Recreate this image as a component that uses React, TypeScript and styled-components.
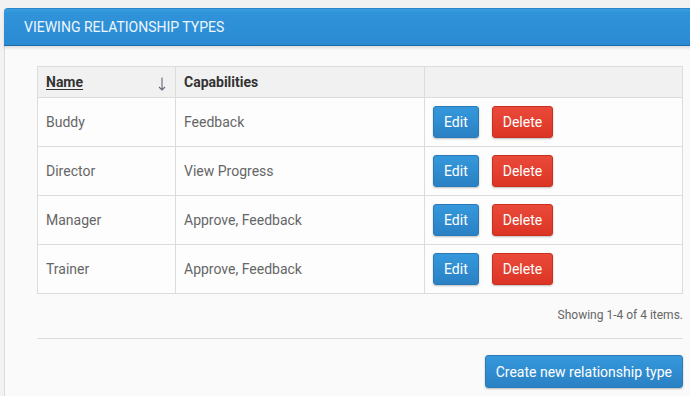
import React from 'react';
import styled, {createGlobalStyle} from 'styled-components';

const GlobalStyle = createGlobalStyle`
body {
    margin: 0;
    background: #f2f2f2;
    font-family: Roboto, "Liberation Sans", sans-serif;
    overflow: hidden;
}
`

const Panel = styled.div`
margin: 8px 0 0 4px;
width: 711px;
border-radius: 4px 4px 0 0;
background: #fafafa;
border-left: 1px solid #dcdcdc;
height: 400px;
`

const PanelHeader = styled.div`
height: 36px;
display: flex;
align-items: center;
padding-left: 20px;
margin-left: -1px;
background: linear-gradient(to bottom, #3a9de0 0%, #3094da 10%, #2a8ad3 100%);
border-top: 1px solid #2a86cc;
border-bottom: 1px solid #1d6aa8;
border-radius: 4px 4px 0 0;
box-shadow: 0 2px 3px rgba(0,0,0,0.12);
color: #eef6fd;
font-size: 14px;
font-weight: 400;
text-transform: uppercase;
`

const PanelBody = styled.div`
padding: 20px 0 0 32px;
width: 646px;
`

const Table = styled.table`
width: 646px;
table-layout: fixed;
border-collapse: collapse;
background: #fdfdfd;
font-size: 14px;
color: #666;
`

const Th = styled.th<{w?: number}>`
box-sizing: border-box;
height: 31px;
padding: 0 8px;
text-align: left;
background: #f1f1f1;
border: 1px solid #dcdcdc;
color: #333;
font-weight: 700;
${p => p.w ? `width: ${p.w}px;` : ''}
`

const SortLink = styled.span`
display: flex;
justify-content: space-between;
align-items: center;
& u {
    text-decoration: underline;
    text-underline-offset: 2px;
}
`

const Arrow = styled.svg`
margin: 4px 1px 0 0;
`

const Td = styled.td`
height: 48px;
padding: 0 8px;
border: 1px solid #dcdcdc;
`

const Btn = styled.button<{kind: 'edit' | 'delete'}>`
height: 32px;
padding: 0 10px;
margin-right: 13px;
border-radius: 3px;
font-family: Roboto, "Liberation Sans", sans-serif;
font-size: 14px;
color: #fff;
cursor: pointer;
box-shadow: 0 1px 2px rgba(0,0,0,0.25);
${p => p.kind === 'edit'
    ? `background: linear-gradient(#3598dc, #2a81c4); border: 1px solid #2a7ab8;`
    : `background: linear-gradient(#ea4a3a, #dc3424); border: 1px solid #c9301f;`}
`

const Summary = styled.div`
text-align: right;
font-size: 12px;
color: #666;
padding: 14px 0 0;
height: 30px;
`

const Rule = styled.hr`
margin: 0;
border: none;
border-top: 1px solid #dddddd;
`

const Footer = styled.div`
display: flex;
justify-content: flex-end;
padding-top: 16px;
`

const CreateButton = styled.button`
height: 33px;
padding: 0 10px;
white-space: nowrap;
border-radius: 3px;
border: 1px solid #2a7ab8;
background: linear-gradient(#3598dc, #2a81c4);
color: #fff;
font-family: Roboto, "Liberation Sans", sans-serif;
font-size: 14px;
box-shadow: 0 1px 2px rgba(0,0,0,0.25);
`

const rows = [
    {name: 'Buddy', caps: 'Feedback'},
    {name: 'Director', caps: 'View Progress'},
    {name: 'Manager', caps: 'Approve, Feedback'},
    {name: 'Trainer', caps: 'Approve, Feedback'},
]

const App: React.FC = () => {
    return (
        <>
            <GlobalStyle />
            <Panel>
                <PanelHeader>Viewing Relationship Types</PanelHeader>
                <PanelBody>
                    <Table>
                        <thead>
                            <tr>
                                <Th w={138}>
                                    <SortLink>
                                        <u>Name</u>
                                        <Arrow width="8" height="14" viewBox="0 0 8 14">
                                            <path d="M4 0.5 V13 M1 10 L4 13 L7 10" stroke="#667" strokeWidth="1.1" fill="none" />
                                        </Arrow>
                                    </SortLink>
                                </Th>
                                <Th w={249}>Capabilities</Th>
                                <Th></Th>
                            </tr>
                        </thead>
                        <tbody>
                            {rows.map(r => (
                                <tr key={r.name}>
                                    <Td>{r.name}</Td>
                                    <Td>{r.caps}</Td>
                                    <Td>
                                        <Btn kind="edit">Edit</Btn>
                                        <Btn kind="delete">Delete</Btn>
                                    </Td>
                                </tr>
                            ))}
                        </tbody>
                    </Table>
                    <Summary>Showing 1-4 of 4 items.</Summary>
                    <Rule />
                    <Footer>
                        <CreateButton>Create new relationship type</CreateButton>
                    </Footer>
                </PanelBody>
            </Panel>
        </>
    )
}

export default App;
